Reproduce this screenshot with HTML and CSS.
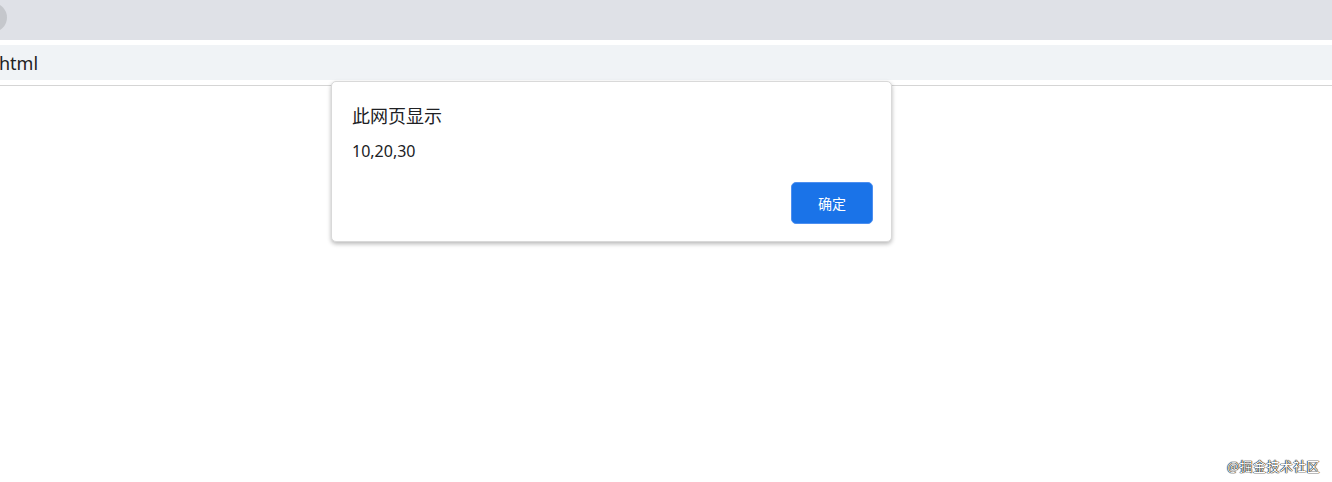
FILE: index.html
```html
<!DOCTYPE html>
<html lang="zh">
<head>
<meta charset="utf-8">
<title>alert</title>
<link rel="stylesheet" href="styles.css">
</head>
<body>
<div class="tabbar"><span class="tabdot"></span></div>
<div class="gap"></div>
<div class="addr"><span class="url">html</span></div>
<div class="gap2"></div>
<div class="page">
  <div class="dialog">
    <div class="title">此网页显示</div>
    <div class="msg">10,20,30</div>
    <div class="actions"><button class="ok">确定</button></div>
  </div>
  <div class="mark">@掘金技术社区</div>
</div>
</body>
</html>
```
FILE: styles.css
```css
html, body { margin: 0; padding: 0; }
body {
  width: 1332px; height: 482px; overflow: hidden; background: #fff;
  font-family: "Noto Sans", "Noto Sans CJK SC", sans-serif;
}
.tabbar { height: 40px; background: #dfe1e7; position: relative; overflow: hidden; }
.tabdot {
  position: absolute; left: -22px; top: 3px; width: 29px; height: 29px;
  border-radius: 50%; background: #c5c7cc;
}
.gap { height: 5px; background: #fff; }
.addr { height: 35px; background: #f0f3f6; display: flex; align-items: center; }
.url { font-size: 18px; color: #222; margin-left: -1px; line-height: 1; }
.gap2 { background: #fff; border-bottom: 1px solid #d5d5d5; box-sizing: border-box; height: 6px; }
.page { position: relative; height: 402px; }
.dialog {
  position: absolute; left: 331px; top: -5px; width: 561px; height: 161px;
  box-sizing: border-box; background: #fff; border: 1px solid #d9d9d9;
  border-radius: 5px; box-shadow: 0 2px 4px rgba(0,0,0,0.28);
  padding: 19px 18px 0 20px;
  font-family: "Noto Sans CJK SC", "Noto Sans", sans-serif;
}
.title { font-size: 18px; color: #202124; line-height: 28px; }
.msg { font-size: 16px; color: #202124; line-height: 22px; margin-top: 11px; font-family: "Noto Sans", "Noto Sans CJK SC", sans-serif; }
.actions { display: flex; justify-content: flex-end; margin-top: 20px; }
.ok {
  width: 82px; height: 42px; border: 1px solid #4d8ff0; border-radius: 5px;
  background: #1a73e8; color: #fff; font-size: 14px;
  font-family: "Noto Sans CJK SC", sans-serif; padding: 0;
}
.mark {
  position: absolute; right: 12px; bottom: 13px; font-size: 13px; color: #fff;
  font-family: "Noto Sans CJK SC", sans-serif; letter-spacing: 0.4px;
  text-shadow: 0 0 1px #000, 0 0 1px #000, 0 0 1px #000;
}
```
